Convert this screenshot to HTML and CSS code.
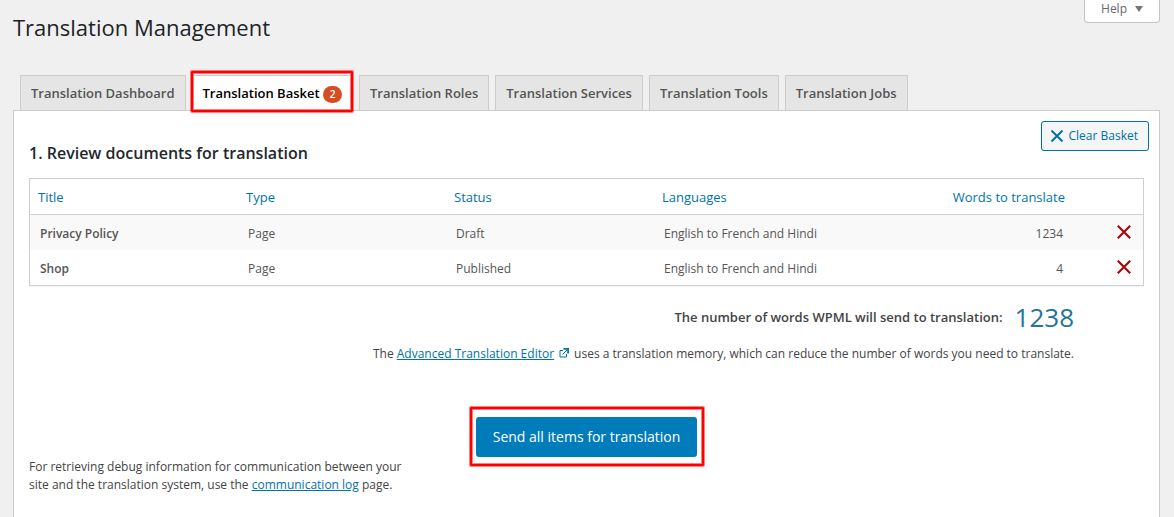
FILE: index.html
```
<!DOCTYPE html>
<html lang="en">
<head>
<meta charset="utf-8">
<meta name="viewport" content="width=device-width, initial-scale=1">
<title>Translation Management</title>
<link rel="stylesheet" href="styles.css">
</head>
<body>
<div class="page">
  <header class="page-header">
    <h1 class="page-title">Translation Management</h1>
    <button class="help" type="button">Help
      <svg class="caret" viewBox="0 0 8 6" aria-hidden="true"><path d="M0 0h8L4 6z"/></svg>
    </button>
  </header>

  <nav class="tabs" aria-label="Sections">
    <a class="tab" href="#dashboard">Translation Dashboard</a>
    <a class="tab tab-active highlight" href="#basket" aria-current="page">Translation Basket <span class="badge">2</span></a>
    <a class="tab" href="#roles">Translation Roles</a>
    <a class="tab" href="#services">Translation Services</a>
    <a class="tab" href="#tools">Translation Tools</a>
    <a class="tab" href="#jobs">Translation Jobs</a>
  </nav>

  <main class="panel">
    <div class="panel-head">
      <h2 class="panel-title">1. Review documents for translation</h2>
      <button class="clear" type="button">
        <svg class="clear-icon" viewBox="0 0 12 12" aria-hidden="true"><path d="M.5.5l11 11M11.500.5L.5 11.500"/></svg>
        Clear Basket
      </button>
    </div>

    <table class="documents">
      <thead>
        <tr>
          <th class="col-short" scope="col">Title</th>
          <th class="col-short" scope="col">Type</th>
          <th class="col-short" scope="col">Status</th>
          <th class="col-languages" scope="col">Languages</th>
          <th class="number" scope="col">Words to translate</th>
          <th class="col-remove" scope="col" aria-label="Remove"></th>
        </tr>
      </thead>
      <tbody>
        <tr>
          <td><strong>Privacy Policy</strong></td>
          <td>Page</td>
          <td>Draft</td>
          <td>English to French and Hindi</td>
          <td class="number">1234</td>
          <td class="remove-cell"><button class="remove" type="button" aria-label="Remove Privacy Policy"><svg class="remove-icon" viewBox="0 0 14 14" aria-hidden="true"><path d="M.8.8l12.400 12.400M13.200.8L.8 13.200"/></svg></button></td>
        </tr>
        <tr>
          <td><strong>Shop</strong></td>
          <td>Page</td>
          <td>Published</td>
          <td>English to French and Hindi</td>
          <td class="number">4</td>
          <td class="remove-cell"><button class="remove" type="button" aria-label="Remove Shop"><svg class="remove-icon" viewBox="0 0 14 14" aria-hidden="true"><path d="M.8.8l12.400 12.400M13.200.8L.8 13.200"/></svg></button></td>
        </tr>
      </tbody>
    </table>

    <section class="summary">
      <p class="total"><strong>The number of words WPML will send to translation:</strong><span class="total-count">1238</span></p>
      <p class="note">The <a class="link" href="#editor">Advanced Translation Editor</a><svg class="external" viewBox="0 0 10 10" aria-hidden="true"><path d="M4 2.500H1v6.500h6.500V6M3.500 6.500L8.500 1.500"/><path class="external-head" d="M4.500.8h4.700v4.700"/></svg>uses a translation memory, which can reduce the number of words you need to translate.</p>
    </section>

    <div class="actions">
      <button class="send highlight" type="button">Send all items for translation</button>
    </div>

    <p class="debug">For retrieving debug information for communication between your site and the translation system, use the <a class="link" href="#log">communication log</a> page.</p>
  </main>
</div>
</body>
</html>
```
FILE: styles.css
```
* { box-sizing: border-box; }

body {
  margin: 0;
  background: #f0f0f1;
  color: #444;
  font: 12px/18px "Segoe UI", "Open Sans", "Noto Sans", sans-serif;
}

h1, h2, p { margin: 0; }

button { font-family: inherit; cursor: pointer; }

.page {
  display: flex;
  flex-direction: column;
  min-height: 100vh;
  padding: 0 14px 0 13px;
}

.page-header {
  display: flex;
  justify-content: space-between;
  align-items: flex-start;
}

.page-title {
  padding-top: 12px;
  color: #1d2327;
  font-size: 22px;
  font-weight: 400;
  line-height: 31px;
}

.help {
  display: flex;
  align-items: center;
  gap: 8px;
  padding: 0 16px 5px;
  border: 1px solid #c3c4c7;
  border-top: 0;
  border-radius: 0 0 4px 4px;
  background: #fff;
  color: #646970;
  font-size: 12px;
  line-height: 17px;
}

.caret { width: 8px; height: 6px; fill: #72777c; }

.tabs {
  display: flex;
  gap: 6px;
  padding: 32px 7px 0;
}

.tab {
  padding: 8px 10px 7px;
  border: 1px solid #ccc;
  border-bottom: 0;
  background: #e5e5e5;
  color: #555;
  font-size: 13px;
  font-weight: 600;
  line-height: 18px;
  text-decoration: none;
  white-space: nowrap;
}

.tab-active {
  background: #fff;
  color: #000;
}

.badge {
  display: inline-block;
  min-width: 19px;
  border-radius: 9px;
  background: #d54e21;
  color: #fff;
  font-size: 10px;
  line-height: 17px;
  text-align: center;
}

.highlight { position: relative; }

.highlight::after {
  content: "";
  position: absolute;
  inset: -5px -1px -2px -2px;
  border: 2px solid #f00;
  border-radius: 1px;
  box-shadow: 0 0 0 1px #ff000080, inset 0 0 0 1px #ff000080;
  pointer-events: none;
}

.panel {
  flex: 1;
  padding: 10px 15px 24px;
  border: 1px solid #ccc;
  border-bottom: 0;
  background: #fff;
}

.panel-head {
  display: flex;
  justify-content: space-between;
  align-items: flex-start;
  margin-right: -5px;
}

.panel-title {
  padding-top: 20px;
  color: #23282d;
  font-size: 16px;
  font-weight: 600;
  line-height: 24px;
}

.clear {
  display: flex;
  align-items: center;
  gap: 5px;
  padding: 5px 10px 5px 8px;
  border: 1px solid #0071a1;
  border-radius: 3px;
  background: #f3f5f6;
  color: #0071a1;
  font-size: 12px;
  line-height: 18px;
}

.clear-icon {
  width: 14px;
  height: 12px;
  fill: none;
  stroke: currentColor;
  stroke-width: 2;
}

.documents {
  width: 100%;
  margin-top: 13px;
  border: 1px solid #ccd0d4;
  border-spacing: 0;
  box-shadow: 0 1px 1px #0000000a;
  table-layout: fixed;
}

.documents th {
  padding: 9px 8px 7px;
  border-bottom: 1px solid #ccd0d4;
  color: #0073aa;
  font-size: 13px;
  font-weight: 400;
  line-height: 19px;
  text-align: left;
}

.documents td {
  padding: 9px 10px 7px;
  color: #555;
  line-height: 19px;
}

.documents tbody tr:nth-child(odd) { background: #f9f9f9; }

.documents .number { text-align: right; }

.col-short { width: 208px; }
.col-languages { width: 250px; }
.col-remove { width: 70px; }

strong { font-weight: 600; }

.documents .remove-cell { padding: 0 12px 3px 0; text-align: right; vertical-align: middle; }

.remove {
  display: inline-flex;
  padding: 0;
  border: 0;
  background: none;
  color: #a00;
  vertical-align: middle;
}

.remove-icon {
  width: 14px;
  height: 14px;
  fill: none;
  stroke: currentColor;
  stroke-width: 2;
}

.summary {
  padding: 15px 70px 0 0;
  text-align: right;
}

.total {
  display: flex;
  justify-content: flex-end;
  align-items: center;
  gap: 12px;
  font-size: 13px;
  line-height: 32px;
}

.total-count { color: #21759b; font-size: 26px; }

.note { padding-top: 12px; }

.link { color: #0073aa; text-decoration: underline; }

.external {
  width: 10px;
  height: 10px;
  margin: 0 5px;
  fill: none;
  stroke: #0073aa;
}

.external-head { stroke-width: 2; }

.actions {
  display: flex;
  justify-content: center;
  padding-top: 54px;
}

.send {
  padding: 10px 17px;
  border: 0;
  border-radius: 3px;
  background: #007cba;
  color: #fff;
  font-size: 14px;
  line-height: 20px;
}

.send.highlight::after { inset: -10px -7px -9px -6px; }

.debug { max-width: 390px; padding-top: 1px; }
```
